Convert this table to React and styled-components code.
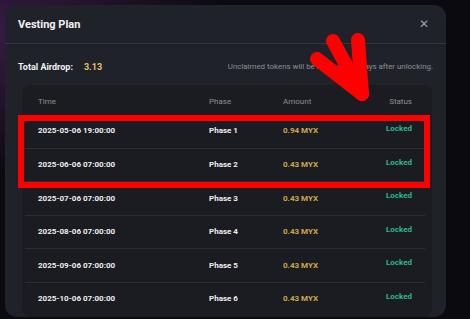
import React from "react";
import styled, { createGlobalStyle } from "styled-components";

const Global = createGlobalStyle`
  html, body {
    margin: 0;
    padding: 0;
    background: #0b0a0f;
    font-family: Roboto, "Noto Sans", sans-serif;
    overflow: hidden;
  }
`;

const Page = styled.div`
  width: 470px;
  height: 319px;
  position: relative;
  padding: 5px 0 0 5px;
  box-sizing: border-box;
  background:
    radial-gradient(ellipse at 0% 10%, rgba(90, 40, 110, 0.55), transparent 35%),
    #0b0a0f;
`;

const Modal = styled.div`
  position: relative;
  width: 441px;
  height: 312px;
  background: #202229;
  border-radius: 12px;
  overflow: hidden;
  display: flex;
  flex-direction: column;
`;

const Header = styled.div`
  height: 38px;
  display: flex;
  align-items: center;
  justify-content: space-between;
  padding: 0 17px 0 13px;
  border-bottom: 1px solid #34363e;
`;

const Title = styled.h2`
  margin: 0;
  color: #f2f2f4;
  font-size: 11px;
  font-weight: 700;
`;

const Close = styled.span`
  color: #9a9ca4;
  font-size: 12px;
  line-height: 1;
`;

const Summary = styled.div`
  display: flex;
  align-items: center;
  justify-content: space-between;
  padding: 4px 13px 0;
  height: 41px;
  box-sizing: border-box;
`;

const Total = styled.div`
  display: flex;
  align-items: center;
  gap: 11px;
  color: #f2f2f4;
  font-size: 9px;
  font-weight: 700;
`;

const Gold = styled.span`
  color: ${(p) => (p.$bright ? "#e6c067" : "#d1a847")};
  font-weight: 700;
`;

const Note = styled.span`
  color: #8c8e96;
  font-size: 7.9px;
`;

const Table = styled.div`
  margin: 0 14px 0 17px;
  background: #1b1c22;
  border-radius: 8px;
  padding: 0 7px 0 3px;
  flex: 1;
`;

const Row = styled.div`
  display: grid;
  grid-template-columns: 171px 74px 100px 1fr;
  align-items: center;
  height: ${(p) => (p.$head ? "29px" : "33.5px")};
  padding: 0 13px;
  font-size: 8px;
  font-weight: 700;
  color: #eeeef0;
  border-top: ${(p) => (p.$head || p.$first ? "none" : "1px solid #2c2e35")};
  box-sizing: border-box;
`;

const HeadCell = styled.span`
  color: #8c8e96;
  font-weight: 400;
  text-align: ${(p) => (p.$right ? "right" : "left")};
  padding-top: 4px;
`;

const Status = styled.span`
  color: #2db78a;
  text-align: right;
  margin-top: -5px;
`;

const Highlight = styled.div`
  position: absolute;
  left: 13px;
  top: 110px;
  width: 412px;
  height: 73px;
  border: 6px solid #ff0000;
  box-sizing: border-box;
  pointer-events: none;
`;

const Arrow = styled.svg`
  position: absolute;
  left: 300px;
  top: 25px;
`;

const rows = [
  ["2025-05-06 19:00:00", "Phase 1", "0.94 MYX"],
  ["2025-06-06 07:00:00", "Phase 2", "0.43 MYX"],
  ["2025-07-06 07:00:00", "Phase 3", "0.43 MYX"],
  ["2025-08-06 07:00:00", "Phase 4", "0.43 MYX"],
  ["2025-09-06 07:00:00", "Phase 5", "0.43 MYX"],
  ["2025-10-06 07:00:00", "Phase 6", "0.43 MYX"],
];

export default function App() {
  return (
    <Page>
      <Global />
      <Modal>
        <Header>
          <Title>Vesting Plan</Title>
          <Close>✕</Close>
        </Header>
        <Summary>
          <Total>
            Total Airdrop:
            <Gold $bright>3.13</Gold>
          </Total>
          <Note>Unclaimed tokens will be removed 30 days after unlocking.</Note>
        </Summary>
        <Table>
          <Row $head>
            <HeadCell>Time</HeadCell>
            <HeadCell>Phase</HeadCell>
            <HeadCell>Amount</HeadCell>
            <HeadCell $right>Status</HeadCell>
          </Row>
          {rows.map((r, i) => (
            <Row key={r[0]} $first={i === 0}>
              <span>{r[0]}</span>
              <span>{r[1]}</span>
              <Gold>{r[2]}</Gold>
              <Status>Locked</Status>
            </Row>
          ))}
        </Table>
        <Highlight />
      </Modal>
      <Arrow width="80" height="80" viewBox="0 0 80 80">
        <g stroke="#ff0000" strokeWidth="14" strokeLinecap="round" fill="none">
          <line x1="58" y1="15" x2="62" y2="69" />
          <line x1="33" y1="16" x2="62" y2="69" />
          <line x1="17" y1="34" x2="62" y2="69" />
        </g>
      </Arrow>
    </Page>
  );
}
